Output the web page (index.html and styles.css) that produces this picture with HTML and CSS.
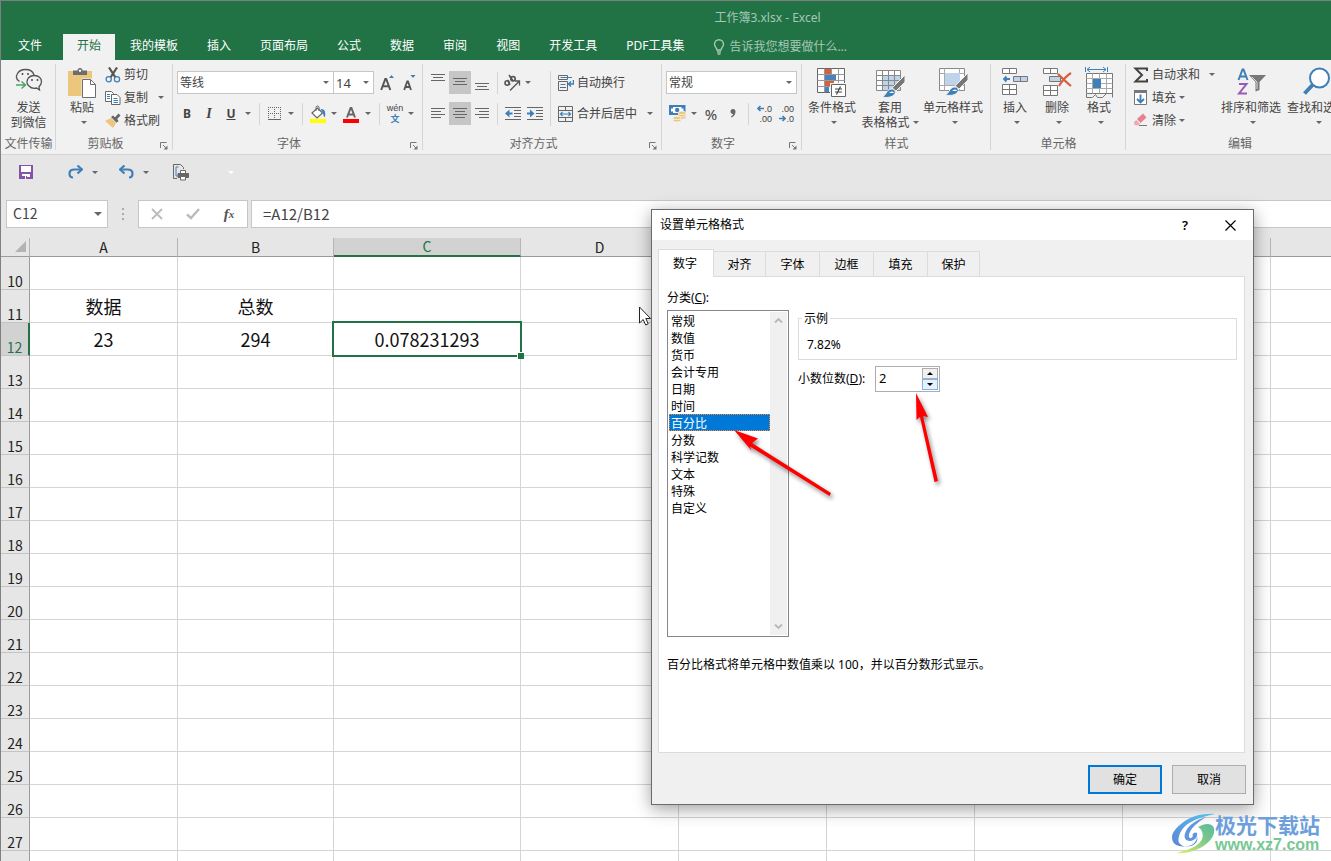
FILE: index.html
```html
<!DOCTYPE html>
<html lang="zh-CN">
<head>
<meta charset="utf-8">
<title>工作簿3.xlsx - Excel</title>
<link rel="stylesheet" href="styles.css">
</head>
<body>
<div class="window">
  <header class="header">
    <div class="title">工作簿3.xlsx - Excel</div>
    <nav class="tabs">
      <button class="tab tab-file">文件</button>
      <button class="tab tab-active">开始</button>
      <button class="tab">我的模板</button>
      <button class="tab">插入</button>
      <button class="tab">页面布局</button>
      <button class="tab">公式</button>
      <button class="tab">数据</button>
      <button class="tab">审阅</button>
      <button class="tab">视图</button>
      <button class="tab">开发工具</button>
      <button class="tab">PDF工具集</button>
      <button class="tab tell-me"><svg width="12" height="16" viewBox="0 0 12 16" fill="none" stroke="currentColor" stroke-width="1.4"><path d="M4 11C4 9 1.500 8 1.500 5.200a4.500 4.500 0 0 1 9 0C10.500 8 8 9 8 11z"/><path d="M4 13h4M4.500 15h3"/></svg>告诉我您想要做什么...</button>
    </nav>
  </header>

  <div class="ribbon">
    <section class="group group-send">
      <div class="group-body">
        <button class="big"><span class="big-icon"><svg width="28" height="26" viewBox="0 0 28 26" fill="none" stroke="#555" stroke-width="1.300"><path d="M4.500 15.500C1.500 13.500 1 10.500 2 8.500 3.500 5 7 3.500 10.500 3.500c4 0 7.500 2 8.500 5.500"/><path d="M14 20c-2-1.500-2.500-4-1.500-6.500 1.300-2.800 4-4 7-4 4 0 7 2.700 7 6 0 2.500-1 3.800-2.500 5l.5 3.500-3-2c-3 .7-5.700 0-7.500-2z"/><path d="M7.500 7v2M13 7v2M17 13v2M22.500 13v2" stroke-width="1.600"/><path d="M1 19h9M6.500 15.500l4 3.500-4 3.500" stroke="#4aa564" stroke-width="1.500"/></svg></span><span>发送</span><span>到微信</span></button>
      </div>
      <div class="group-label">文件传输</div>
    </section>

    <section class="group group-clip">
      <div class="group-body">
        <button class="big"><span class="big-icon"><svg width="30" height="32" viewBox="0 0 30 32"><path d="M1 5h24v25H1z" fill="#ecc67d"/><path d="M6 4.500h4.500a2.500 2.500 0 0 1 5 0H20v4.500H6z" fill="#6d6d6d"/><circle cx="13" cy="4.800" r="1.200" fill="#f1f1f1"/><path d="M14.500 12.500h10l5 5v14.500h-15z" fill="#f1f1f1"/><path d="M15.500 13.500h8l5 5v13h-13z" fill="#fff" stroke="#6d6d6d"/><path d="M23.500 13.500v5h5" fill="none" stroke="#6d6d6d"/></svg></span><span>粘贴</span><span class="caret-line"><i class="caret"></i></span></button>
        <div class="stack">
          <button class="small"><svg width="16" height="16" viewBox="0 0 16 16" fill="none"><path d="M4 .5l6.500 10M12 .5l-6.500 10" stroke="#555" stroke-width="2.200"/><circle cx="3.700" cy="12.200" r="2.600" stroke="#3f7fb8" stroke-width="1.300"/><circle cx="12" cy="12.200" r="2.600" stroke="#3f7fb8" stroke-width="1.300"/></svg>剪切</button>
          <button class="small"><svg width="16" height="16" viewBox="0 0 16 16" stroke="#666" fill="#fff"><path d="M.5 1.500h6l2 2v8h-8z"/><path d="M6.500 4.500h5.500l3 3v7H6.500z"/><path d="M2 4.500h3M2 6.500h3M2 8.500h3M8.500 8.500h4M8.500 10.500h4.500M8.500 12.500h4.500" stroke="#3f7fb8"/></svg>复制<i class="caret caret-far"></i></button>
          <button class="small"><svg width="16" height="16" viewBox="0 0 16 16"><path d="M0 8l6-3L11 10 8 15z" fill="#ecc67d"/><path d="M6 4l2-1.500 2 1.700L13.500.500l2 2L12.200 6l1.300 2-2 1.700z" fill="#666"/></svg>格式刷</button>
        </div>
      </div>
      <div class="group-label has-launcher">剪贴板<svg class="launcher" width="8" height="8" viewBox="0 0 8 8" fill="none" stroke="#777"><path d="M.5 6V.500h6M3 3l3 3"/><path d="M7.500 3.500v4h-4z" fill="#777" stroke="none"/></svg></div>
    </section>

    <section class="group group-font">
      <div class="group-body rows">
        <div class="line">
          <span class="combo combo-font"><select aria-label="字体"><option>等线</option></select><i class="caret"></i></span>
          <span class="combo combo-size"><select aria-label="字号"><option>14</option></select><i class="caret"></i></span>
          <button class="cell cell-grow" aria-label="增大字号"><svg width="16" height="18" viewBox="0 0 16 18"><path d="M1.200 16L5.300 5h.9l4.100 11M3 12.200h5.600" fill="none" stroke="#555" stroke-width="2"/><path d="M9 4l2.500-3L14 4z" fill="#3f7fb8"/></svg></button>
          <button class="cell" aria-label="减小字号"><svg width="14" height="18" viewBox="0 0 14 18"><path d="M1.200 16l3-8.500h.8l3 8.500M2.500 13h4.300" fill="none" stroke="#555" stroke-width="1.800"/><path d="M7.500 1l2.500 3 2.500-3z" fill="#3f7fb8"/></svg></button>
        </div>
        <div class="line">
          <button class="cell bold">B</button><button class="cell italic">I</button><button class="cell under">U</button><button class="drop" aria-label="下划线"><i class="caret"></i></button>
          <i class="sep sep-wide"></i>
          <button class="cell cell-20" aria-label="边框"><svg width="14" height="14" viewBox="0 0 14 14" fill="none" stroke="#666"><path d="M.5 0v12M6.500 0v12M12.500 0v12M0 .5h13M0 6.500h13" stroke-dasharray="1 1"/><path d="M0 12.500h13" /></svg></button><button class="drop" aria-label="边框样式"><i class="caret"></i></button>
          <i class="sep sep-wide"></i>
          <button class="cell cell-20" aria-label="填充颜色"><svg width="18" height="18" viewBox="0 0 18 18"><path d="M3 8L8.500 3l5 5-5.500 5z" fill="#fff" stroke="#666" stroke-width="1.200"/><path d="M7 6V2.500a1.500 1.500 0 0 1 3 0V6" fill="none" stroke="#666"/><path d="M11.500 4c4-.5 5.500 2.500 4.500 8-2 0-1.500-3.500-2.500-5z" fill="#3f7fb8"/><path d="M1 14h16v4H1z" fill="#ff0"/></svg></button><button class="drop" aria-label="颜色列表"><i class="caret"></i></button>
          <button class="cell" aria-label="字体颜色"><svg width="18" height="18" viewBox="0 0 18 18"><path d="M5 12.500L8.600 3h.8L13 12.500M6.500 9.500h5" fill="none" stroke="#666" stroke-width="2"/><path d="M1 14h16v4H1z" fill="#f00"/></svg></button><button class="drop" aria-label="字体颜色列表"><i class="caret"></i></button>
          <i class="sep sep-wide"></i>
          <button class="cell cell-20 pinyin"><span>wén</span><span class="blue">文</span></button><button class="drop" aria-label="拼音"><i class="caret"></i></button>
        </div>
      </div>
      <div class="group-label has-launcher">字体<svg class="launcher" width="8" height="8" viewBox="0 0 8 8" fill="none" stroke="#777"><path d="M.5 6V.500h6M3 3l3 3"/><path d="M7.500 3.500v4h-4z" fill="#777" stroke="none"/></svg></div>
    </section>

    <section class="group group-align">
      <div class="group-body rows-split">
        <div class="rows">
          <div class="line">
            <button class="cell" aria-label="顶端对齐"><svg width="14" height="21" viewBox="0 0 14 21" stroke="#666"><path d="M0 2.500h14M2 5.500h10M0 8.500h14"/></svg></button>
            <button class="cell on" aria-label="垂直居中"><svg width="14" height="21" viewBox="0 0 14 21" stroke="#666"><path d="M0 6.500h14M2 9.500h10M0 12.500h14"/></svg></button>
            <button class="cell" aria-label="底端对齐"><svg width="14" height="21" viewBox="0 0 14 21" stroke="#666"><path d="M0 11.500h14M2 14.500h10M0 17.500h14"/></svg></button>
            <i class="sep"></i>
            <button class="cell cell-20" aria-label="方向"><svg width="18" height="18" viewBox="0 0 18 18" fill="none" stroke="#555" stroke-width="1.300"><path d="M7 16.500L16 7.500M12 7H16.500V11.500"/><circle cx="4.200" cy="9" r="2.200" stroke-width="1.600"/><path d="M4.500 5.800L7 10.800" stroke-width="1.600"/><path d="M6 1l4 6" stroke-width="1.600"/><circle cx="10" cy="4.800" r="2.200" stroke-width="1.600"/></svg></button><button class="drop" aria-label="方向列表"><i class="caret"></i></button>
          </div>
          <div class="line">
            <button class="cell" aria-label="左对齐"><svg width="14" height="13" viewBox="0 0 14 13" stroke="#666"><path d="M0 1.500h14M0 4.500h10M0 7.500h14M0 10.500h10"/></svg></button>
            <button class="cell on" aria-label="居中"><svg width="14" height="13" viewBox="0 0 14 13" stroke="#666"><path d="M0 1.500h14M2 4.500h10M0 7.500h14M2 10.500h10"/></svg></button>
            <button class="cell" aria-label="右对齐"><svg width="14" height="13" viewBox="0 0 14 13" stroke="#666"><path d="M0 1.500h14M4 4.500h10M0 7.500h14M4 10.500h10"/></svg></button>
            <i class="sep"></i>
            <button class="cell" aria-label="减少缩进"><svg width="16" height="14" viewBox="0 0 16 14" fill="none" stroke="#666"><path d="M0 .5h16M9 3.500h7M9 6.500h7M9 9.500h7M0 12.500h16"/><path d="M7.500 6.500H2" stroke="#3f7fb8" stroke-width="2"/><path d="M0 6.500l4.500-4v8z" fill="#3f7fb8" stroke="none"/></svg></button>
            <button class="cell" aria-label="增加缩进"><svg width="16" height="14" viewBox="0 0 16 14" fill="none" stroke="#666"><path d="M0 .5h16M9 3.500h7M9 6.500h7M9 9.500h7M0 12.500h16"/><path d="M0 6.500h5" stroke="#3f7fb8" stroke-width="2"/><path d="M7.500 6.500l-4.500-4v8z" fill="#3f7fb8" stroke="none"/></svg></button>
          </div>
        </div>
        <i class="sep sep-tall"></i>
        <div class="rows wrap-col">
          <button class="small line"><svg width="16" height="16" viewBox="0 0 16 16" fill="none" stroke="#666"><path d="M.5.500h9v4h-9zM.5 6.500h9v9h-9z"/><path d="M2.500 2.500H14M2.500 9.500h5" stroke="#3f7fb8"/><path d="M2 12.500h6"/><path d="M15.500 5v4h-5M13 6.500L10.500 9l2.500 2.500" stroke="#3f7fb8" stroke-width="1.500"/></svg>自动换行</button>
          <button class="small line"><svg width="16" height="16" viewBox="0 0 16 16" fill="none" stroke="#666"><path d="M.5.500h14v15H.5zM.5 4.500h14M.5 11.500h14M7.500.500v4M7.500 11.500v4"/><path d="M3 8h9M4.500 6L2.500 8l2 2M10.500 6l2 2-2 2" stroke="#3f7fb8" stroke-width="1.200"/></svg>合并后居中<i class="caret caret-far"></i></button>
        </div>
      </div>
      <div class="group-label has-launcher">对齐方式<svg class="launcher" width="8" height="8" viewBox="0 0 8 8" fill="none" stroke="#777"><path d="M.5 6V.500h6M3 3l3 3"/><path d="M7.500 3.500v4h-4z" fill="#777" stroke="none"/></svg></div>
    </section>

    <section class="group group-number">
      <div class="group-body rows">
        <div class="line"><span class="combo combo-number"><select aria-label="数字格式"><option>常规</option></select><i class="caret"></i></span></div>
        <div class="line">
          <button class="cell" aria-label="会计数字格式"><svg width="17" height="17" viewBox="0 0 17 17"><path d="M1 1h14.500v8H1z" fill="#fff" stroke="#3f7fb8" stroke-width="2"/><path d="M1 1h3v2.500H1zM12.500 1h3v2.500h-3zM1 6.500h3V9H1z" fill="#3f7fb8"/><circle cx="8.200" cy="5" r="2.200" fill="#3f7fb8"/><g fill="#ecc67d" stroke="#f1f1f1" stroke-width=".8"><ellipse cx="13" cy="12.500" rx="4" ry="1.700"/><ellipse cx="13" cy="10.200" rx="4" ry="1.700"/><ellipse cx="13" cy="7.900" rx="4" ry="1.700"/><ellipse cx="8" cy="15.200" rx="4" ry="1.700"/><ellipse cx="8" cy="12.900" rx="4" ry="1.700"/></g></svg></button><button class="drop" aria-label="货币列表"><i class="caret"></i></button>
          <button class="cell sign">%</button>
          <button class="cell" aria-label="千位分隔样式"><svg width="8" height="12" viewBox="0 0 8 12"><path d="M1.500 3.500a2.500 2.500 0 1 1 5 0c0 3-1.500 5-4 6l-.6-1C3.500 7.500 4 6.800 4 6 2.500 6 1.500 5 1.500 3.500z" fill="#666"/></svg></button>
          <i class="sep"></i>
          <button class="cell decimals"><span><svg width="7" height="7" viewBox="0 0 7 7" fill="none" stroke="#3f7fb8" stroke-width="1.600"><path d="M7 3.500H1M3.500 1L1 3.500 3.500 6"/></svg>.0</span><span>.00</span></button>
          <button class="cell decimals"><span>.00</span><span><svg width="7" height="7" viewBox="0 0 7 7" fill="none" stroke="#3f7fb8" stroke-width="1.600"><path d="M0 3.500h6M3.500 1L6 3.500 3.500 6"/></svg>.0</span></button>
        </div>
      </div>
      <div class="group-label has-launcher">数字<svg class="launcher" width="8" height="8" viewBox="0 0 8 8" fill="none" stroke="#777"><path d="M.5 6V.500h6M3 3l3 3"/><path d="M7.500 3.500v4h-4z" fill="#777" stroke="none"/></svg></div>
    </section>

    <section class="group group-style">
      <div class="group-body">
        <button class="big"><span class="big-icon"><svg width="30" height="31" viewBox="0 0 30 31"><path d="M.5 2.500h27v24H.5z" fill="#fff" stroke="#666"/><path d="M.5 8.500h27M.5 14.500h27M.5 20.500h27M7.500 2.500v24M14.500 2.500v24M21.500 2.500v24" stroke="#999" fill="none"/><path d="M8 3h6v5H8zM8 15h9v5H8z" fill="#d65f3d"/><path d="M8 9h11v5H8zM8 21h4v5H8z" fill="#4a82bd"/><path d="M13 17h17v14H13z" fill="#f1f1f1"/><path d="M14.500 18.500h14v12h-14z" fill="#fff" stroke="#666"/><path d="M18 23h7M18 26h7M23.500 20.500l-4 8" stroke="#444" stroke-width="1.200"/></svg></span><span>条件格式</span><span class="caret-line"><i class="caret"></i></span></button>
        <button class="big"><span class="big-icon"><svg width="30" height="32" viewBox="0 0 30 32"><path d="M1.500 4.500h24v20h-24z" fill="#fff"/><path d="M7 10h18v14H7z" fill="#bfd3ea"/><path d="M1.500 4.500h24v20h-24zM1.500 9.500h24M1.500 14.500h24M1.500 19.500h24M7.500 4.500v20M13.500 4.500v20M19.500 4.500v20" fill="none" stroke="#888"/><path d="M30 9v7L21 25l-4-3z" fill="#777" stroke="#f1f1f1"/><path d="M7 31c4-1 4-7 9-8 3-.5 5 2 4 4.500-2 4-8 4.500-13 3.500z" fill="#3f7fb8" stroke="#f1f1f1"/><path d="M14 27c2-2 4-2 5 0z" fill="#fff"/></svg></span><span>套用</span><span class="caret-line">表格格式<i class="caret"></i></span></button>
        <button class="big"><span class="big-icon"><svg width="32" height="31" viewBox="0 0 32 31"><path d="M2.500 2.500h25v22h-25z" fill="#fff" stroke="#888"/><path d="M2.500 7.500h25M2.500 19.500h25M7.500 2.500v22M22.500 2.500v22" stroke="#aaa"/><path d="M8 7h15v12H8z" fill="#bfd3ea"/><path d="M31 7v7L22 23l-4-3z" fill="#777" stroke="#f1f1f1"/><path d="M8 29c4-1 4-7 9-8 3-.5 5 2 4 4.500-2 4-8 4.500-13 3.500z" fill="#3f7fb8" stroke="#f1f1f1"/><path d="M15 25c2-2 4-2 5 0z" fill="#fff"/></svg></span><span>单元格样式</span><span class="caret-line"><i class="caret"></i></span></button>
      </div>
      <div class="group-label">样式</div>
    </section>

    <section class="group group-cells">
      <div class="group-body">
        <button class="big"><span class="big-icon"><svg width="28" height="30" viewBox="0 0 28 30" fill="#fff" stroke="#777"><path d="M1.500 2.500h14v5h-14zM8.500 2.500v5M1.500 18.500h14v10h-14zM8.500 18.500v10M1.500 23.500h14"/><path d="M12.500 10.500h14v5h-14zM19.500 10.500v5" fill="#bfd3ea"/><path d="M9 13H3M5.500 10.500L3 13l2.500 2.500" fill="none" stroke="#3f7fb8" stroke-width="1.800"/></svg></span><span>插入</span><span class="caret-line"><i class="caret"></i></span></button>
        <button class="big"><span class="big-icon"><svg width="30" height="30" viewBox="0 0 30 30" fill="#fff" stroke="#777"><path d="M1.500 2.500h14v5h-14zM8.500 2.500v5M1.500 19.500h14v10h-14zM8.500 19.500v10M1.500 24.500h14"/><path d="M7.500 10.500h11v5h-11z" fill="#bfd3ea"/><path d="M16 8c4 4 8 8 13 12M29 7c-5 3-9 8-12 13" fill="none" stroke="#d65f3d" stroke-width="2.200"/></svg></span><span>删除</span><span class="caret-line"><i class="caret"></i></span></button>
        <button class="big"><span class="big-icon"><svg width="28" height="33" viewBox="0 0 28 33" fill="#fff" stroke="#777"><path d="M1.500 7.500h26v20h-26z"/><path d="M1.500 12.500h26M1.500 22.500h26M7.500 7.500v20M14.500 7.500v20M21.500 7.500v20M1.500 17.500h26" stroke="#aaa"/><path d="M8 13h8v9H8z" fill="#3f7fb8" stroke="none"/><path d="M1.500 28v3.500h6l3-3 2 3h5l4-4h6v4" fill="none"/><path d="M.5 1v5M22.500 1v5M2 3.500h19M5 1L2 3.500 5 6M18 1l3 2.500L18 6" fill="none" stroke="#3f7fb8"/></svg></span><span>格式</span><span class="caret-line"><i class="caret"></i></span></button>
      </div>
      <div class="group-label">单元格</div>
    </section>

    <section class="group group-edit">
      <div class="group-body">
        <div class="stack">
          <button class="small"><svg width="16" height="16" viewBox="0 0 16 16" fill="none" stroke="#444" stroke-width="2"><path d="M14 4V1.500H2.500L9 8l-6.500 6.500H14V12"/></svg>自动求和<i class="caret caret-mid"></i></button>
          <button class="small"><svg width="16" height="16" viewBox="0 0 16 16"><path d="M1.500.5h12v14h-12z" fill="#fff" stroke="#777"/><path d="M1 0h13v3H1z" fill="#777"/><path d="M7.500 4.500v8M4 9l3.500 3.500L11 9" fill="none" stroke="#3f7fb8" stroke-width="1.900"/></svg>填充<i class="caret"></i></button>
          <button class="small"><svg width="16" height="16" viewBox="0 0 16 16"><path d="M4 6L10 .5l3.500 4-6 5.500z" fill="#e8818f"/><path d="M3.300 7L7 11l-2 1.500-3.500-.5L1 9z" fill="#f0a8b0"/><path d="M6 12.500h8" stroke="#777"/></svg>清除<i class="caret"></i></button>
        </div>
        <button class="big"><span class="big-icon"><svg width="30" height="30" viewBox="0 0 30 30" fill="none"><path d="M2.500 14l4-10.500h1l4 10.500M4 10.500h6" stroke="#3f7fb8" stroke-width="2"/><path d="M3 18h7.500L3 27.500h8" stroke="#9b59b6" stroke-width="2"/><path d="M13 9h17l-6.500 7v8l-4 1.500V16z" fill="#777"/><path d="M16 11l5 5v7" stroke="#ddd"/></svg></span><span>排序和筛选</span><span class="caret-line"><i class="caret"></i></span></button>
        <button class="big"><span class="big-icon"><svg width="30" height="30" viewBox="0 0 30 30"><circle cx="17.500" cy="12" r="9.500" fill="#fff" stroke="#3f7fb8" stroke-width="2"/><path d="M11 18.500L2.500 27.500" stroke="#3f7fb8" stroke-width="4"/></svg></span><span>查找和选择</span><span class="caret-line"><i class="caret"></i></span></button>
      </div>
      <div class="group-label">编辑</div>
    </section>
  </div>

  <div class="quick">
    <button class="quick-btn" aria-label="保存"><svg width="14" height="14" viewBox="0 0 14 14"><path d="M0 0h14v14H0z" fill="#8752a8"/><path d="M2 1h10v6H2zM3 9h8v5H3z" fill="#fff"/><path d="M3 11h3v3H3zM7 11h1v3H7zM8 12h3v2H8z" fill="#8752a8"/></svg></button>
    <button class="quick-btn quick-redo" aria-label="恢复"><svg width="15" height="14" viewBox="0 0 15 14" fill="none" stroke="#3f7fb8" stroke-width="2.200"><path d="M13 4.500H6.500C3.500 4.500 1.500 6 1.500 8.500S3 12.500 5 12.500"/><path d="M9.500.5l4.500 4-4.500 4"/></svg><i class="caret"></i></button>
    <button class="quick-btn quick-undo" aria-label="撤消"><svg width="15" height="14" viewBox="0 0 15 14" fill="none" stroke="#3f7fb8" stroke-width="2.200"><path d="M2 4.500h6.500c3 0 5 1.500 5 4s-1.500 4-3.500 4"/><path d="M5.500.5L1 4.500l4.500 4"/></svg><i class="caret"></i></button>
    <button class="quick-btn quick-print" aria-label="打印预览"><svg width="17" height="17" viewBox="0 0 17 17" fill="none" stroke="#666"><path d="M5 14.500H1.500V.5h7l3 3V5"/><path d="M6.500 3H4v9h1.500" stroke="#3f7fb8"/><path d="M8.500 6.500h5v3h-5z" fill="#fff"/><path d="M6 9.500h10.500v4H6z" fill="#666"/><path d="M8.500 12.500h5v3.500h-5z" fill="#fff"/></svg></button>
    <button class="quick-btn quick-more" aria-label="自定义快速访问工具栏"><i class="caret caret-light"></i></button>
  </div>

  <div class="formula">
    <div class="name-box"><input aria-label="名称框" value="C12"><i class="caret caret-big"></i></div>
    <svg class="grip" width="3" height="12" viewBox="0 0 3 12" fill="#aaa"><path d="M0 0h2v2H0zM0 5h2v2H0zM0 10h2v2H0z"/></svg>
    <div class="formula-tools">
      <button aria-label="取消输入"><svg width="12" height="12" viewBox="0 0 12 12" stroke="#bbb" stroke-width="1.800"><path d="M1 1l10 10M11 1L1 11"/></svg></button>
      <button aria-label="输入"><svg width="14" height="12" viewBox="0 0 14 12" stroke="#bbb" stroke-width="2.400" fill="none"><path d="M1 6.500L5 10l8-9"/></svg></button>
      <button class="fx">f<small>x</small></button>
    </div>
    <input class="formula-input" aria-label="编辑栏" value="=A12/B12">
  </div>

  <div class="sheet">
    <table class="grid">
      <colgroup><col class="w-head"><col class="w-148"><col class="w-156"><col class="w-187"><col class="w-158"><col class="w-148"><col class="w-148"><col class="w-148"><col class="w-148"><col class="w-148"></colgroup>
      <thead><tr><th class="corner"><svg width="12" height="12" viewBox="0 0 12 12"><path d="M11 0v11H0z" fill="#b3b3b3"/></svg></th><th>A</th><th>B</th><th class="picked">C</th><th>D</th><th>E</th><th>F</th><th>G</th><th>H</th><th></th></tr></thead>
      <tbody>
        <tr><th>10</th><td></td><td></td><td></td><td></td><td></td><td></td><td></td><td></td><td></td></tr>
        <tr><th>11</th><td>数据</td><td>总数</td><td></td><td></td><td></td><td></td><td></td><td></td><td></td></tr>
        <tr><th class="picked">12</th><td>23</td><td>294</td><td class="active">0.078231293</td><td></td><td></td><td></td><td></td><td></td><td></td></tr>
        <tr><th>13</th><td></td><td></td><td></td><td></td><td></td><td></td><td></td><td></td><td></td></tr>
        <tr><th>14</th><td></td><td></td><td></td><td></td><td></td><td></td><td></td><td></td><td></td></tr>
        <tr><th>15</th><td></td><td></td><td></td><td></td><td></td><td></td><td></td><td></td><td></td></tr>
        <tr><th>16</th><td></td><td></td><td></td><td></td><td></td><td></td><td></td><td></td><td></td></tr>
        <tr><th>17</th><td></td><td></td><td></td><td></td><td></td><td></td><td></td><td></td><td></td></tr>
        <tr><th>18</th><td></td><td></td><td></td><td></td><td></td><td></td><td></td><td></td><td></td></tr>
        <tr><th>19</th><td></td><td></td><td></td><td></td><td></td><td></td><td></td><td></td><td></td></tr>
        <tr><th>20</th><td></td><td></td><td></td><td></td><td></td><td></td><td></td><td></td><td></td></tr>
        <tr><th>21</th><td></td><td></td><td></td><td></td><td></td><td></td><td></td><td></td><td></td></tr>
        <tr><th>22</th><td></td><td></td><td></td><td></td><td></td><td></td><td></td><td></td><td></td></tr>
        <tr><th>23</th><td></td><td></td><td></td><td></td><td></td><td></td><td></td><td></td><td></td></tr>
        <tr><th>24</th><td></td><td></td><td></td><td></td><td></td><td></td><td></td><td></td><td></td></tr>
        <tr><th>25</th><td></td><td></td><td></td><td></td><td></td><td></td><td></td><td></td><td></td></tr>
        <tr><th>26</th><td></td><td></td><td></td><td></td><td></td><td></td><td></td><td></td><td></td></tr>
        <tr><th>27</th><td></td><td></td><td></td><td></td><td></td><td></td><td></td><td></td><td></td></tr>
        <tr><th></th><td></td><td></td><td></td><td></td><td></td><td></td><td></td><td></td><td></td></tr>
      </tbody>
    </table>
  </div>
</div>

<section class="dialog" role="dialog" aria-labelledby="dialog-title">
  <div class="dialog-title">
    <span id="dialog-title">设置单元格格式</span>
    <button class="help">?</button>
    <button aria-label="关闭"><svg width="11" height="11" viewBox="0 0 11 11" stroke="#000" stroke-width="1.200"><path d="M.5.500l10 10M10.500.500l-10 10"/></svg></button>
  </div>
  <div class="dialog-body">
    <div class="dialog-tabs">
      <button class="dtab dtab-on">数字</button><button class="dtab">对齐</button><button class="dtab">字体</button><button class="dtab">边框</button><button class="dtab">填充</button><button class="dtab">保护</button>
    </div>
    <div class="pane">
      <label class="list-label" for="category">分类(<u>C</u>):</label>
      <div class="pane-cols">
        <div class="listbox">
          <select id="category" size="12">
            <option>常规</option><option>数值</option><option>货币</option><option>会计专用</option><option>日期</option><option>时间</option><option selected>百分比</option><option>分数</option><option>科学记数</option><option>文本</option><option>特殊</option><option>自定义</option>
          </select>
          <div class="scroll">
            <svg width="9" height="7" viewBox="0 0 9 7" fill="none" stroke="#b8b8b8" stroke-width="1.800"><path d="M1 5.500L4.500 2 8 5.500"/></svg>
            <svg width="9" height="7" viewBox="0 0 9 7" fill="none" stroke="#b8b8b8" stroke-width="1.800"><path d="M1 1.500L4.500 5 8 1.500"/></svg>
          </div>
        </div>
        <div class="options">
          <fieldset class="sample"><legend>示例</legend><div>7.82%</div></fieldset>
          <div class="places">
            <label for="places">小数位数(<u>D</u>):</label>
            <div class="spin">
              <input id="places" value="2">
              <div class="spin-btns"><button aria-label="增加"><i class="tri-up"></i></button><button class="hot" aria-label="减少"><i class="tri-down"></i></button></div>
            </div>
          </div>
        </div>
      </div>
      <p class="note">百分比格式将单元格中数值乘以 100，并以百分数形式显示。</p>
    </div>
    <div class="dialog-actions"><button class="primary">确定</button><button>取消</button></div>
  </div>
</section>

<svg class="pointer" width="14" height="20" viewBox="0 0 14 20"><path d="M1.500 1v16l3.700-3.500L7.700 19l2.500-1.200L7.800 12.500h4.700z" fill="#fff" stroke="#222"/></svg>
<svg class="mark mark-list" width="110" height="76" viewBox="0 0 110 76"><path d="M4 4l24 8.500-6 4.500 79 50-1.500 3L20 20.500l1.500 4z" fill="#f00"/></svg>
<svg class="mark mark-spin" width="36" height="104" viewBox="0 0 36 104"><path d="M5 4l12 24-5-1 15 65-3.500 1L9 28l-3.500 3z" fill="#f00"/></svg>

<div class="brand">
  <svg width="44" height="42" viewBox="0 0 44 42"><defs><linearGradient id="sky" x1="0" y1="1" x2="1" y2="0"><stop offset="0" stop-color="#5b86d6"/><stop offset="1" stop-color="#56c3ee"/></linearGradient><linearGradient id="leaf" x1="0" y1="1" x2="1" y2="0"><stop offset="0" stop-color="#e9ef6a"/><stop offset=".6" stop-color="#7bc98a"/><stop offset="1" stop-color="#59b9a0"/></linearGradient></defs><path d="M44 1C30 0 18 4 10 11 4 16 1 20 1 24c0 6 4 10 13 9.500-5-1.500-7-4-6.500-8C8.500 18 14 12 20 9 27 5 35 3 44 1z" fill="url(#sky)"/><path d="M35 4C25 7 18 12 15 18c-3 6-1 10 4 10 5-.5 8-4 7-8-1.500-1.500-4 0-4.500 1.500 1 2-1 4-2.500 3.500-2-1-1-5 1-8 3-5 9-9 15-13z" fill="#5f96dd"/><path d="M13 33.500c8 0 13-4 13-10 2 5-3 11-13 10z" fill="#5b86d6"/><path d="M27 14c7-4 13-4 15.500 0 2 4 0 10-4 14C31 36 18 41 5 40c13-3 22-7 25-12 3-5 2-11-3-14z" fill="url(#leaf)"/></svg>
  <div><div class="brand-name">极光下载站</div><div class="brand-url">www.xz7.com</div></div>
</div>
</body>
</html>
```

FILE: styles.css
```css
* { box-sizing: border-box; }

body {
  margin: 0;
  height: 100vh;
  position: relative;
  overflow: hidden;
  font: 12px/18px "Noto Sans", "Noto Sans CJK SC", sans-serif;
  color: #444;
}

button, input, select {
  margin: 0;
  padding: 0;
  border: 0;
  border-radius: 0;
  background: none;
  font: inherit;
  color: inherit;
  white-space: nowrap;
}

input:focus, select:focus { outline: none; }

svg { display: block; flex: none; }

.window {
  height: 100%;
  display: flex;
  flex-direction: column;
  border-top: 1px solid #808080;
  border-left: 1px solid #808080;
  background: #e6e6e6;
}

/* Title and ribbon tabs */
.header { background: #217346; color: #fff; }

.title {
  height: 33px;
  padding-left: 203px;
  line-height: 33px;
  text-align: center;
  color: #a6c7b5;
}

.tabs { display: flex; gap: 1px; height: 26px; }
.tab { padding: 0 14px 2px; line-height: 24px; }
.tab-file { padding: 0 20px 2px 17px; }
.tab-active { background: #f1f1f1; color: #217346; }
.tell-me { display: flex; align-items: center; gap: 4px; color: #a6c7b5; padding-bottom: 0; }

/* Ribbon */
.ribbon {
  display: flex;
  flex: none;
  height: 95px;
  overflow: hidden;
  background: #f1f1f1;
  border-bottom: 1px solid #d5d5d5;
}

.group { position: relative; flex: none; display: flex; flex-direction: column; }
.group::after {
  content: "";
  position: absolute;
  top: 4px;
  right: 0;
  bottom: 4px;
  border-right: 1px solid #d5d5d5;
}
.group-send { width: 55px; }
.group-clip { width: 117px; }
.group-font { width: 250px; }
.group-align { width: 239px; }
.group-number { width: 140px; }
.group-style { width: 189px; }
.group-cells { width: 135px; }
.group-edit { width: 228px; }

.group-body { display: flex; height: 74px; padding-top: 3px; }
.group-label { line-height: 20px; text-align: center; color: #666; white-space: nowrap; }
.has-launcher { padding-right: 18px; }
.launcher { position: absolute; right: 5px; bottom: 4px; }

.big {
  display: flex;
  flex-direction: column;
  align-items: center;
  padding-top: 3px;
  line-height: 15px;
}
.big-icon { display: flex; justify-content: center; height: 34px; }
.caret-line { display: flex; align-items: center; height: 15px; }
.caret-line .caret { margin-left: 3px; }
.group-send .big { flex: 1; }
.group-clip .group-body { padding-left: 3px; }
.group-clip .big { width: 46px; }
.group-style .big { width: 60px; }
.group-style .big:nth-child(2) { width: 56px; }
.group-style .big:nth-child(3) { width: 70px; }
.group-cells .group-body { padding-left: 3px; }
.group-cells .big { width: 42px; }
.group-edit .group-body { padding-left: 7px; }
.group-edit .stack { width: 85px; }
.group-edit .big { width: 66px; flex: none; }

.stack { display: flex; flex-direction: column; align-items: flex-start; }
.small { display: flex; align-items: center; gap: 3px; height: 23px; }

.caret {
  flex: none;
  width: 0;
  height: 0;
  border: 3px solid transparent;
  border-bottom: 0;
  border-top-color: #666;
}
.caret-far { margin-left: 7px; }
.caret-mid { margin-left: 6px; }
.caret-big { border-width: 4px 4px 0; }
.caret-light { border-top-color: #fff; }

.rows { display: flex; flex-direction: column; gap: 8px; }
.group-body.rows, .rows-split { padding-top: 11px; padding-left: 4px; }
.line { display: flex; align-items: center; height: 23px; }
.wrap-col { padding-left: 3px; }

.cell { display: flex; align-items: center; justify-content: center; width: 22px; height: 23px; }
.cell-20 { width: 20px; }
.cell-grow { margin-left: 3px; }
.group-font .rows { padding-left: 3px; }
.on { background: #c6c6c6; }
.drop { display: flex; align-items: center; justify-content: center; width: 12px; height: 23px; }
.bold, .italic, .under { font-weight: 700; }
.italic { font-family: "Liberation Serif", serif; font-style: italic; font-size: 14px; }
.under { text-decoration: underline; }

.pinyin {
  flex-direction: column;
  font-family: "Liberation Sans", "Noto Sans CJK SC", sans-serif;
  font-size: 9px;
  line-height: 11px;
}
.blue { color: #3f7fb8; font-weight: 700; }
.sign { font-size: 15px; }
.decimals {
  flex-direction: column;
  align-items: flex-end;
  padding-right: 3px;
  font-family: "Liberation Sans", sans-serif;
  font-size: 9px;
  line-height: 10px;
}
.decimals span { display: flex; align-items: center; }

.sep { width: 1px; height: 22px; margin: 0 4px; background: #d5d5d5; }
.sep-wide { margin: 0 5px; }
.sep-tall { height: 55px; }

.combo {
  display: flex;
  align-items: center;
  height: 23px;
  padding-right: 4px;
  border: 1px solid #c6c6c6;
  background: #fff;
}
.combo select { flex: 1; min-width: 0; height: 21px; padding-left: 2px; appearance: none; }
.combo-font { width: 157px; margin-left: 1px; }
.combo-size { width: 40px; border-left: 0; }
.combo-size select { font-size: 13px; }
.combo-number { width: 131px; }

/* Quick access bar */
.quick { display: flex; flex: none; align-items: center; height: 45px; padding: 0 0 11px 18px; }
.quick-btn { display: flex; align-items: center; gap: 9px; }
.quick-redo { margin-left: 35px; }
.quick-undo { margin-left: 21px; }
.quick-print { margin-left: 23px; }
.quick-more { margin-left: 39px; }

/* Formula bar */
.formula { display: flex; flex: none; align-items: center; height: 28px; padding-left: 5px; font-size: 14px; }
.name-box {
  display: flex;
  align-items: center;
  width: 102px;
  height: 28px;
  padding: 0 5px 0 6px;
  border: 1px solid #c6c6c6;
  background: #fff;
}
.name-box input { flex: 1; min-width: 0; padding-bottom: 2px; font-family: "Noto Sans CJK SC", sans-serif; }
.grip { margin: 0 13px 0 14px; }
.formula-tools { display: flex; width: 110px; height: 28px; border: 1px solid #c6c6c6; background: #fff; }
.formula-tools button { display: flex; flex: 1; align-items: center; justify-content: center; }
.formula-tools .fx { font: italic bold 15px/18px "Liberation Serif", serif; color: #555; }
.fx small { font-size: 11px; }
.formula-input {
  flex: 1;
  min-width: 0;
  height: 28px;
  margin-left: 3px;
  padding: 0 0 2px 11px;
  border: 1px solid #c6c6c6;
  border-right: 0;
  background: #fff;
  font-family: "Noto Sans CJK SC", sans-serif;
  font-size: 15px;
}

/* Worksheet */
.sheet { flex: 1; min-height: 0; padding-top: 10px; overflow: hidden; }
.grid {
  width: 1418px;
  table-layout: fixed;
  border-collapse: separate;
  border-spacing: 0;
  background: #fff;
  font-family: "Noto Sans CJK SC", sans-serif;
  color: #111;
}
.w-head { width: 29px; }
.w-148 { width: 148px; }
.w-156 { width: 156px; }
.w-187 { width: 187px; }
.w-158 { width: 158px; }
.grid th, .grid td { padding: 0; text-align: center; }
.grid td {
  height: 33px;
  border-right: 1px solid #d4d4d4;
  border-bottom: 1px solid #d4d4d4;
  font-size: 18px;
  line-height: 26px;
}
.grid th { background: #e6e6e6; font-weight: 400; font-size: 14px; color: #222; }
.grid thead th {
  height: 19px;
  line-height: 18px;
  border-right: 1px solid #b5b5b5;
  border-bottom: 1px solid #9b9b9b;
}
.grid tbody th {
  vertical-align: bottom;
  line-height: 16px;
  border-right: 1px solid #9b9b9b;
  border-bottom: 1px solid #c4c4c4;
}
.grid .corner svg { margin-left: 14px; }
.grid .picked { background: #d2d2d2; color: #217346; }
.grid thead .picked { border-bottom: 2px solid #217346; line-height: 17px; }
.grid tbody .picked { border-right: 2px solid #217346; }
.active { position: relative; }
.active::before {
  content: "";
  position: absolute;
  inset: -2px;
  border: 2px solid #217346;
}
.active::after {
  content: "";
  position: absolute;
  right: -4px;
  bottom: -4px;
  width: 6px;
  height: 6px;
  border: 1px solid #fff;
  border-width: 1px 0 0 1px;
  background: #217346;
}

/* Format cells dialog */
.dialog {
  position: absolute;
  left: 651px;
  top: 209px;
  width: 603px;
  border: 1px solid #6b6b6b;
  background: #f0f0f0;
  color: #000;
  box-shadow: 0 4px 16px rgba(0, 0, 0, .38);
}
.dialog-title {
  display: flex;
  align-items: center;
  height: 30px;
  padding: 0 17px 0 8px;
  background: #fff;
}
.dialog-title span { flex: 1; }
.dialog-title .help { margin-right: 37px; font-size: 13px; font-weight: 600; }
.dialog-body { padding: 9px 7px 10px 6px; }
.dialog-tabs { display: flex; align-items: flex-end; position: relative; }
.dtab {
  width: 54px;
  height: 25px;
  border: 1px solid #dcdcdc;
  border-left: 0;
  border-bottom: 0;
  line-height: 24px;
  padding-top: 1px;
}
.dtab-on {
  width: 56px;
  height: 28px;
  margin-bottom: -1px;
  padding: 0 2px 0 0;
  border-left: 1px solid #dcdcdc;
  background: #fff;
}
.dtab:nth-child(2), .dtab:nth-child(6) { width: 52px; }
.pane { margin-right: 1px; padding: 12px 7px 78px 8px; border: 1px solid #dcdcdc; background: #fff; }
.list-label { display: block; margin-bottom: 3px; }
.pane-cols { display: flex; gap: 9px; }
.listbox { display: flex; width: 122px; height: 327px; padding: 1px; border: 1px solid #828790; }
.listbox select { width: 101px; height: 323px; overflow: hidden; appearance: none; }
.listbox option { height: 17px; min-height: 17px; padding: 0 2px 2px; line-height: 15px; color: #000; }
.listbox option:checked {
  background: linear-gradient(#0078d7, #0078d7);
  -webkit-text-fill-color: #fff;
  outline: 1px dotted #ff8728;
  outline-offset: -1px;
}
.scroll {
  display: flex;
  flex: 1;
  flex-direction: column;
  align-items: center;
  justify-content: space-between;
  padding: 5px 0;
  background: #f0f0f0;
}
.options { flex: 1; min-width: 0; }
.sample { margin: 0; padding: 0 4px 5px 3px; border: 1px solid #dcdcdc; }
.sample legend { padding: 1px 2px 0; line-height: 16px; }
.sample div { padding: 9px 0 0 5px; }
.places { display: flex; align-items: center; margin-top: 6px; }
.places label { width: 77px; }
.spin { display: flex; width: 65px; height: 26px; padding: 1px; border: 1px solid #abadb3; }
.spin input { flex: 1; min-width: 0; padding: 0 2px 3px; font-size: 13px; }
.spin-btns { display: flex; flex-direction: column; width: 16px; background: #f0f0f0; }
.spin-btns button {
  display: flex;
  flex: 1;
  align-items: center;
  justify-content: center;
  border: 1px solid #adadad;
}
.spin-btns .hot { border-color: #7eb4ea; background: #e5f1fb; }
.tri-up, .tri-down { border: 3px solid transparent; }
.tri-up { border-top: 0; border-bottom-color: #000; }
.tri-down { border-bottom: 0; border-top-color: #000; }
.note { margin: 19px 0 0; }
.dialog-actions { display: flex; justify-content: flex-end; gap: 10px; padding-top: 12px; }
.dialog-actions button { width: 74px; height: 29px; border: 1px solid #adadad; background: #e1e1e1; }
.dialog-actions .primary { border: 2px solid #0078d7; }

/* Pointer, callout arrows and site mark */
.pointer { position: absolute; left: 638px; top: 306px; }
.mark { position: absolute; filter: drop-shadow(2px 3px 2px rgba(0, 0, 0, .45)); }
.mark-list { left: 730px; top: 426px; }
.mark-spin { left: 911px; top: 389px; }

.brand {
  position: absolute;
  right: 11px;
  bottom: 6px;
  display: flex;
  align-items: center;
}
.brand-name {
  font: 700 21px/22px "Noto Sans CJK SC", sans-serif;
  color: #6c9fdc;
}
.brand-url {
  font: 700 16px/20px "Liberation Sans", sans-serif;
  color: #76c893;
}
```
